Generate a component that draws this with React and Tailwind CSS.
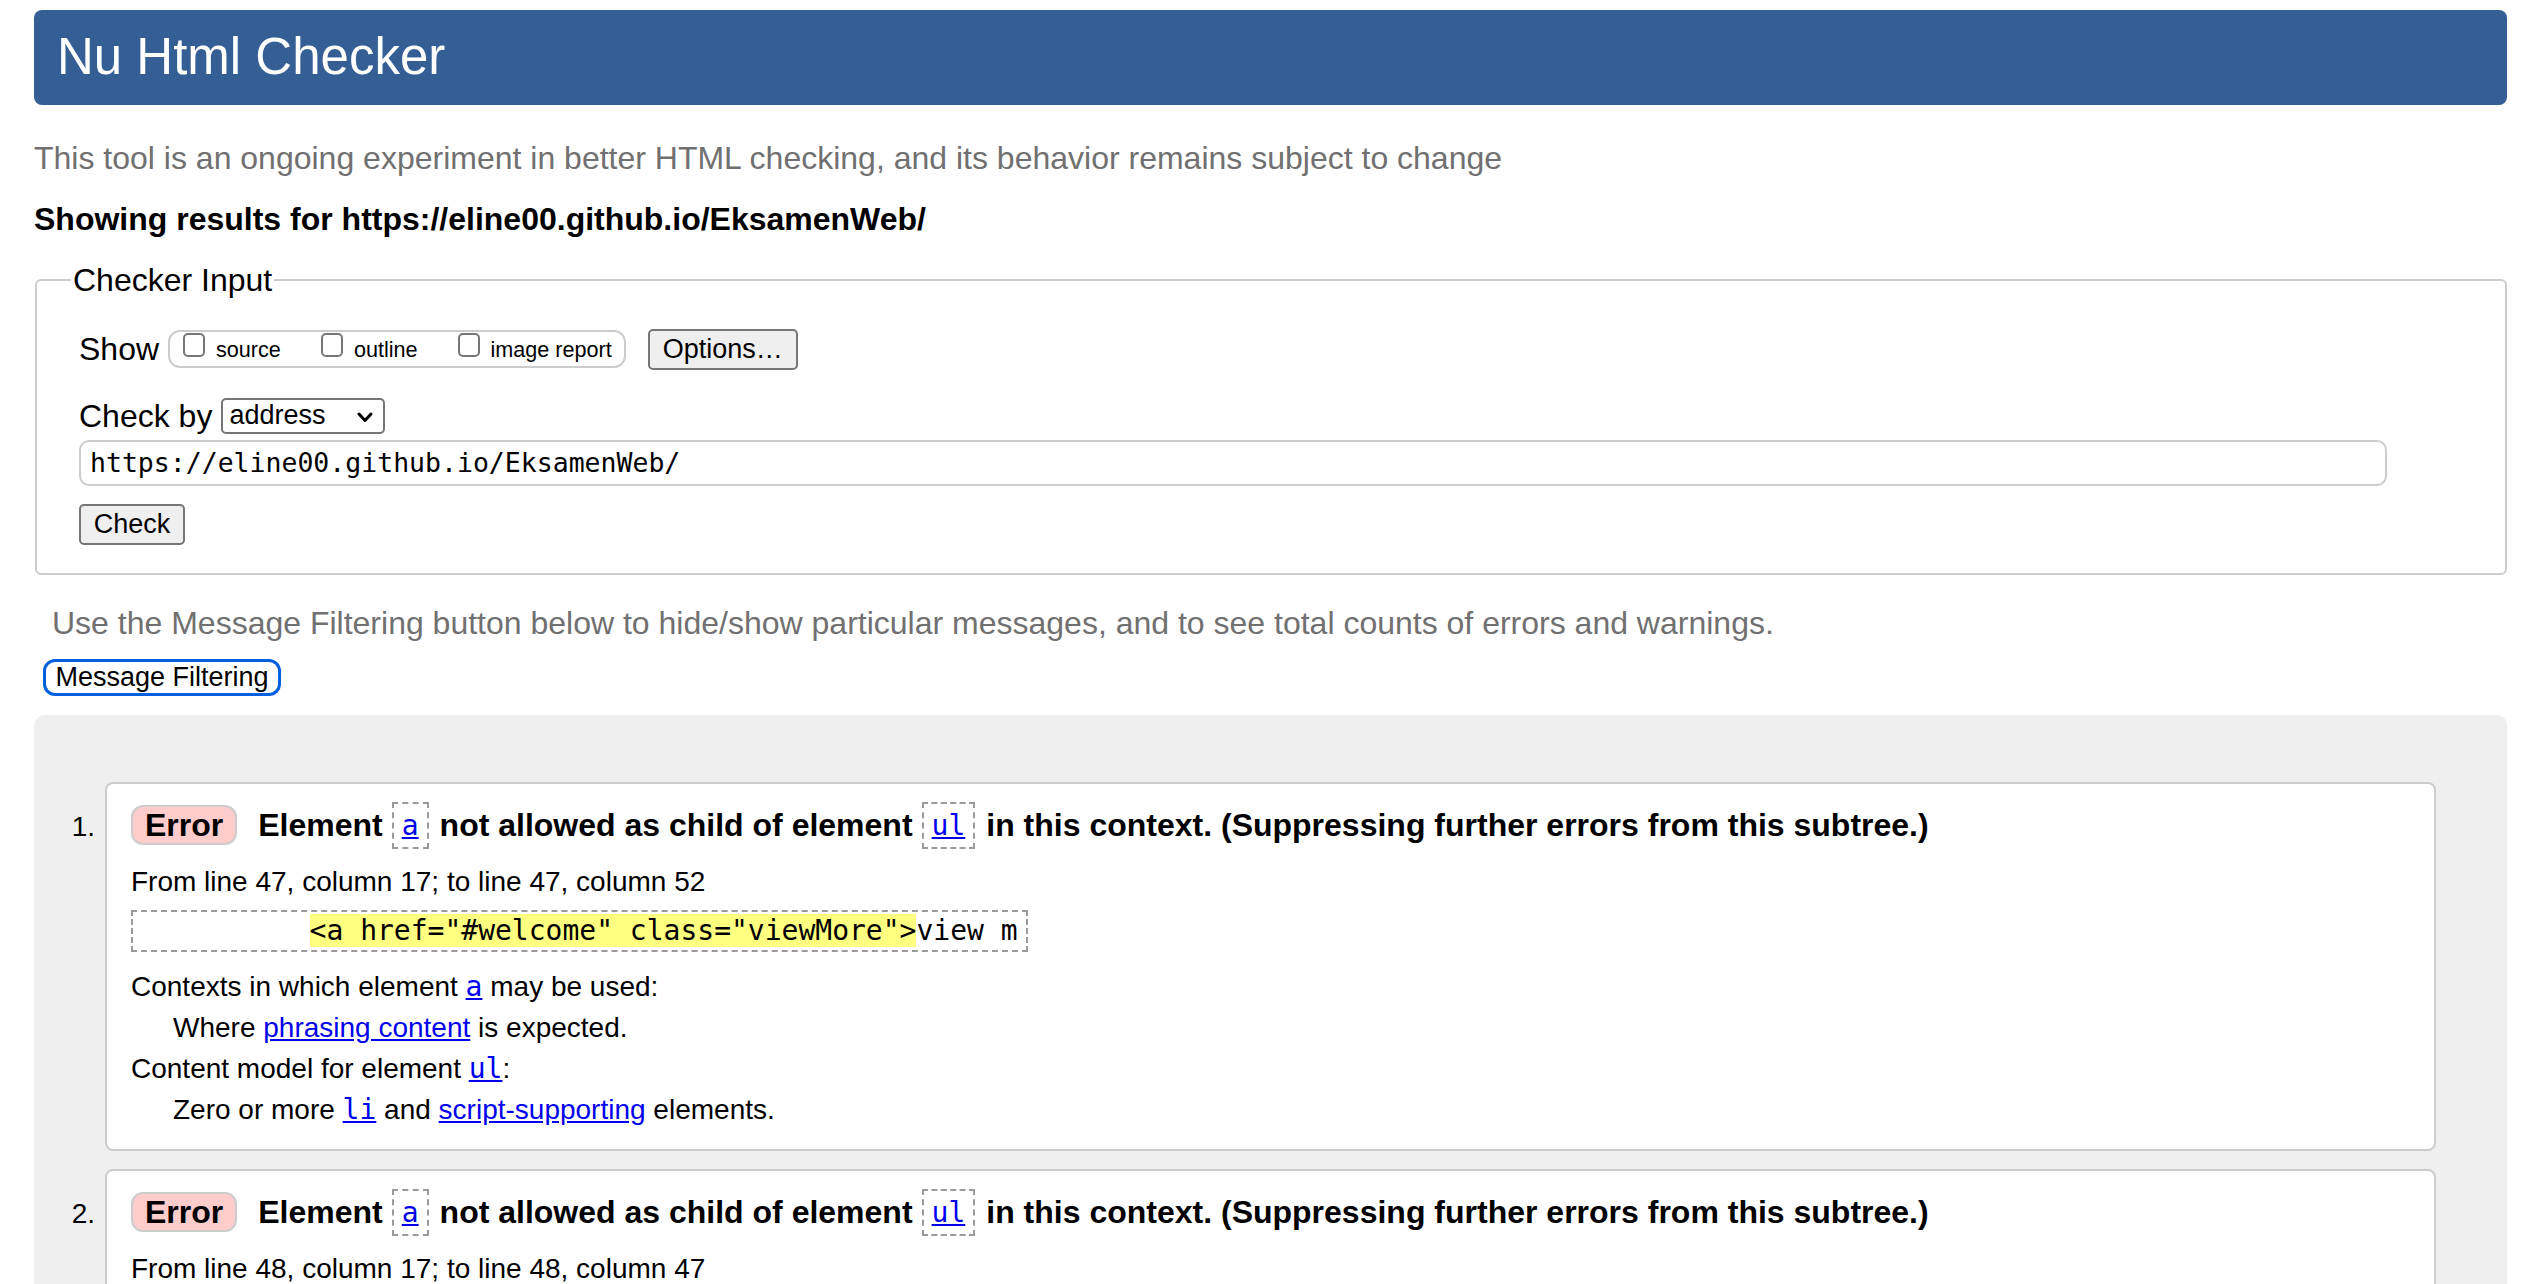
// Nu Html Checker – results page
const sans = "font-['Liberation_Sans',Arial,Helvetica,sans-serif]";
const mono = "font-['DejaVu_Sans_Mono','Liberation_Mono',monospace]";

function Checkbox({ label }) {
  return (
    <label className="flex items-baseline gap-[11px]">
      <span className="block h-[24px] w-[22px] rounded-[5px] border-2 border-[#767676] bg-white" />
      <span className="text-[21.6px] leading-[25px]">{label}</span>
    </label>
  );
}

function GrayButton({ children, className = "" }) {
  return (
    <button
      type="button"
      className={`h-[41px] rounded-[5px] border-2 border-[#767676] bg-[#efefef] text-[27px] leading-none text-black ${className}`}
    >
      {children}
    </button>
  );
}

function Code({ children, className = "" }) {
  return (
    <span
      className={`inline-flex h-[47px] items-center border-2 border-dashed border-[#9a9a9a] px-[8px] ${mono} text-[28px] font-normal ${className}`}
    >
      <a href="#" className="text-[#0000ee] underline">
        {children}
      </a>
    </span>
  );
}

function CodeLink({ children }) {
  return (
    <a href="#" className={`${mono} text-[#0000ee] underline`}>
      {children}
    </a>
  );
}

function TextLink({ children }) {
  return (
    <a href="#" className="text-[#0000ee] underline">
      {children}
    </a>
  );
}

function Message({ n, from, extract }) {
  return (
    <li className="flex items-baseline">
      <div className="w-[71px] shrink-0 pr-[10px] text-right text-[28px]">{n}.</div>
      <div className="flex-1 rounded-[8px] border-2 border-[#cccccc] bg-white pb-[19px] pl-[24px] pt-[18px]">
        <div className="flex items-center gap-[9px] text-[32px] font-bold leading-[37px]">
          <span className="mr-[12px] flex h-[40px] items-center rounded-[12px] border-2 border-[#cccccc] bg-[#ffcccc] px-[12px]">
            Error
          </span>
          <span>Element</span>
          <Code className="mr-[2px]">a</Code>
          <span>not allowed as child of element</span>
          <Code className="mr-[2px]">ul</Code>
          <span>in this context. (Suppressing further errors from this subtree.)</span>
        </div>
        <p className="mt-[12px] text-[28px] leading-[41px]">{from}</p>
        <div className="mt-[8px]">
          <code
            className={`inline-block whitespace-pre border-2 border-dashed border-[#9a9a9a] px-[8px] py-[3px] ${mono} text-[28px] leading-[32px]`}
          >
            {"          "}
            <mark className="bg-[#ffff80] text-black">{extract[0]}</mark>
            {extract[1]}
          </code>
        </div>
        <div className="mt-[14px] text-[28px] leading-[41px]">
          <p>
            Contexts in which element <CodeLink>a</CodeLink> may be used:
          </p>
          <p className="pl-[42px]">
            Where <TextLink>phrasing content</TextLink> is expected.
          </p>
          <p>
            Content model for element <CodeLink>ul</CodeLink>:
          </p>
          <p className="pl-[42px]">
            Zero or more <CodeLink>li</CodeLink> and <TextLink>script-supporting</TextLink> elements.
          </p>
        </div>
      </div>
    </li>
  );
}

export default function App() {
  return (
    <div className={`min-h-[1284px] overflow-hidden bg-white pl-[34px] pr-[23px] pt-[10px] text-black ${sans}`}>
      <header className="flex h-[95px] items-center rounded-[8px] bg-[#355e95] pb-[2px] pl-[23px]">
        <h1 className="text-[51px] font-normal leading-none text-white">Nu Html Checker</h1>
      </header>

      <p className="mt-[35px] text-[32px] leading-[37px] text-[#707070]">
        This tool is an ongoing experiment in better HTML checking, and its behavior remains subject to change
      </p>
      <p className="mt-[24px] text-[32px] font-bold leading-[37px]">
        Showing results for https://eline00.github.io/EksamenWeb/
      </p>

      <fieldset className="ml-[1px] mt-[23.5px] rounded-[6px] border-2 border-[#cccccc] pb-[28px] pl-[42px] pr-[118px] pt-[30px]">
        <legend className="-ml-[8px] px-[2px] text-[32px] leading-[37px]">Checker Input</legend>

        <div className="flex h-[41px] items-center">
          <span className="text-[32px]">Show</span>
          <div className="ml-[9px] flex h-[38px] items-center gap-[40px] rounded-[12px] border-2 border-[#cccccc] pb-[3px] pl-[13px] pr-[12px]">
            <Checkbox label="source" />
            <Checkbox label="outline" />
            <Checkbox label="image report" />
          </div>
          <GrayButton className="ml-[22px] w-[150px]">Options…</GrayButton>
        </div>

        <div className="mt-[28px] flex h-[36px] items-center">
          <span className="text-[32px]">Check by</span>
          <div className="ml-[9px] flex h-[36px] w-[164px] items-center justify-between rounded-[5px] border-2 border-[#767676] bg-white pl-[6px] pr-[10px] text-[27px]">
            <span>address</span>
            <svg width="16" height="11" viewBox="0 0 16 11" className="mt-[4px]">
              <polyline points="2,2 8,8.5 14,2" fill="none" stroke="#000" strokeWidth="3" strokeLinecap="round" strokeLinejoin="round" />
            </svg>
          </div>
        </div>

        <input
          readOnly
          value="https://eline00.github.io/EksamenWeb/"
          className={`mt-[6px] block h-[46px] w-full rounded-[10px] border-2 border-[#cccccc] bg-white pl-[9px] ${mono} text-[26.5px] text-black outline-none`}
        />

        <GrayButton className="mt-[18px] block w-[106px]">Check</GrayButton>
      </fieldset>

      <p className="mt-[30px] pl-[18px] text-[32px] leading-[37px] text-[#707070]">
        Use the Message Filtering button below to hide/show particular messages, and to see total counts of errors and warnings.
      </p>
      <button
        type="button"
        className="ml-[9px] mt-[17px] flex h-[37px] w-[238px] items-center justify-center rounded-[12px] border-[3px] border-[#0060df] bg-white text-[27px] leading-none"
      >
        Message Filtering
      </button>

      <div className="mt-[19px] rounded-t-[10px] bg-[#efefef] pb-[40px] pr-[71px] pt-[67px]">
        <ol className="flex flex-col gap-[18px]">
          <Message
            n={1}
            from="From line 47, column 17; to line 47, column 52"
            extract={['<a href="#welcome" class="viewMore">', "view m"]}
          />
          <Message
            n={2}
            from="From line 48, column 17; to line 48, column 47"
            extract={['<a href="#about" class="viewMore">', "view m"]}
          />
        </ol>
      </div>
    </div>
  );
}
